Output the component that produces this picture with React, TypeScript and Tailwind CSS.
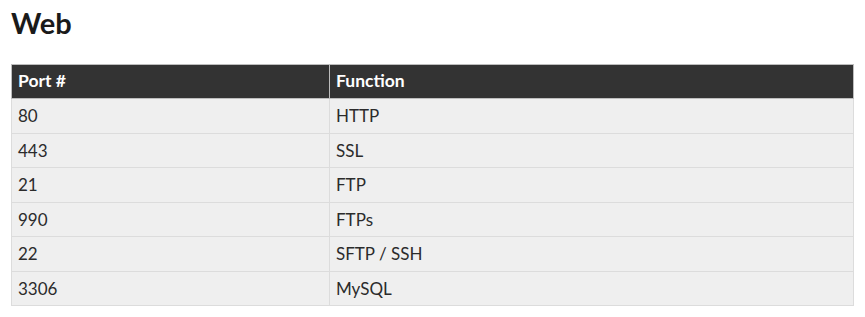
const rows = [
  ["80", "HTTP"],
  ["443", "SSL"],
  ["21", "FTP"],
  ["990", "FTPs"],
  ["22", "SFTP / SSH"],
  ["3306", "MySQL"],
]

export default function App() {
  return (
    <div className="w-[865px] h-[317px] bg-white px-[11px] pt-[3px] font-['Lato','Noto_Sans',sans-serif] text-[#2b2b2b]">
      <h2 className="text-[29px] font-bold leading-[40px] text-[#1a1a1a]">Web</h2>

      <table className="mt-[21px] w-[843px] border-collapse border border-[#c8c8c8] text-[17px]">
        <thead>
          <tr className="h-[34px] bg-[#333333] text-white">
            <th className="w-[318px] border border-[#bdbdbd] px-[6px] text-left font-bold text-[17.5px]">Port #</th>
            <th className="border border-[#bdbdbd] px-[6px] text-left font-bold text-[17.5px]">Function</th>
          </tr>
        </thead>
        <tbody>
          {rows.map(([port, fn]) => (
            <tr key={port} className="h-[34.5px] bg-[#efefef]">
              <td className="border border-[#dcdcdc] px-[6px]">{port}</td>
              <td className="border border-[#dcdcdc] px-[6px]">{fn}</td>
            </tr>
          ))}
        </tbody>
      </table>
    </div>
  )
}
